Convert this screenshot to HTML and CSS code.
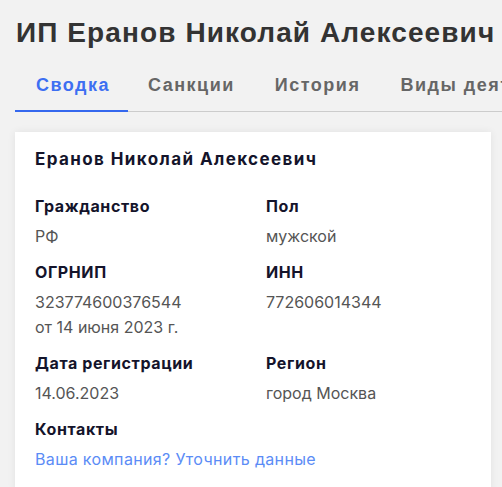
FILE: index.html
```html
<!DOCTYPE html>
<html lang="ru">
<head>
<meta charset="utf-8">
<link rel="stylesheet" href="styles.css">
</head>
<body>
<div class="page">
  <h1 class="title">ИП Еранов Николай Алексеевич</h1>
  <nav class="tabs">
    <a class="tab active">Сводка</a>
    <a class="tab">Санкции</a>
    <a class="tab">История</a>
    <a class="tab">Виды деятельности</a>
  </nav>
  <section class="card">
    <h2 class="card-title">Еранов Николай Алексеевич</h2>
    <div class="grid">
      <div class="field">
        <div class="label">Гражданство</div>
        <div class="value">РФ</div>
      </div>
      <div class="field">
        <div class="label">Пол</div>
        <div class="value">мужской</div>
      </div>
      <div class="field">
        <div class="label">ОГРНИП</div>
        <div class="value">323774600376544<br>от 14 июня 2023 г.</div>
      </div>
      <div class="field">
        <div class="label">ИНН</div>
        <div class="value">772606014344</div>
      </div>
      <div class="field">
        <div class="label">Дата регистрации</div>
        <div class="value">14.06.2023</div>
      </div>
      <div class="field">
        <div class="label">Регион</div>
        <div class="value">город Москва</div>
      </div>
      <div class="field full">
        <div class="label">Контакты</div>
        <a class="link">Ваша компания? Уточнить данные</a>
      </div>
    </div>
  </section>
</div>
</body>
</html>
```
FILE: styles.css
```css
html, body {
  margin: 0;
  padding: 0;
  background: #f2f2f2;
  overflow: hidden;
}
.page {
  padding: 16px 0 0 15px;
  width: 600px;
}
.title {
  margin: 0 0 0 1px;
  font-family: "Liberation Sans", Arial, sans-serif;
  font-weight: 700;
  font-size: 28px;
  line-height: 34px;
  letter-spacing: 1.1px;
  color: #333333;
  white-space: nowrap;
}
.tabs {
  display: flex;
  margin-top: 24px;
  border-bottom: 1px solid #cccccc;
  white-space: nowrap;
}
.tab {
  font-family: "Liberation Sans", Arial, sans-serif;
  font-weight: 700;
  font-size: 18px;
  line-height: 22px;
  letter-spacing: 1.5px;
  color: #666666;
  padding: 0 20px 14px 20px;
  border-bottom: 2px solid transparent;
  margin-bottom: -1px;
}
.tab.active {
  color: #3d6ff2;
  border-bottom-color: #3568ee;
  padding-left: 21px;
  width: 72px;
}
.card {
  width: 436px;
  margin-top: 20px;
  background: #ffffff;
  box-shadow: 0 0 8px rgba(0, 0, 0, 0.07);
  padding: 15px 20px 20px 20px;
  font-family: Inter, "Noto Sans", sans-serif;
}
.card-title {
  margin: 0 0 22px 0;
  font-size: 17px;
  font-weight: 700;
  line-height: 25px;
  letter-spacing: 1.4px;
  color: #14142b;
}
.grid {
  display: grid;
  grid-template-columns: 231px 1fr;
  row-gap: 11px;
}
.full {
  grid-column: 1 / -1;
}
.label {
  font-size: 16px;
  font-weight: 700;
  line-height: 25px;
  letter-spacing: 0.6px;
  color: #14142b;
  margin-bottom: 5px;
}
.value {
  font-size: 16px;
  font-weight: 400;
  line-height: 25px;
  color: #555555;
}
.link {
  display: block;
  font-size: 16px;
  line-height: 25px;
  letter-spacing: 0.35px;
  color: #5b8cf6;
}
```
